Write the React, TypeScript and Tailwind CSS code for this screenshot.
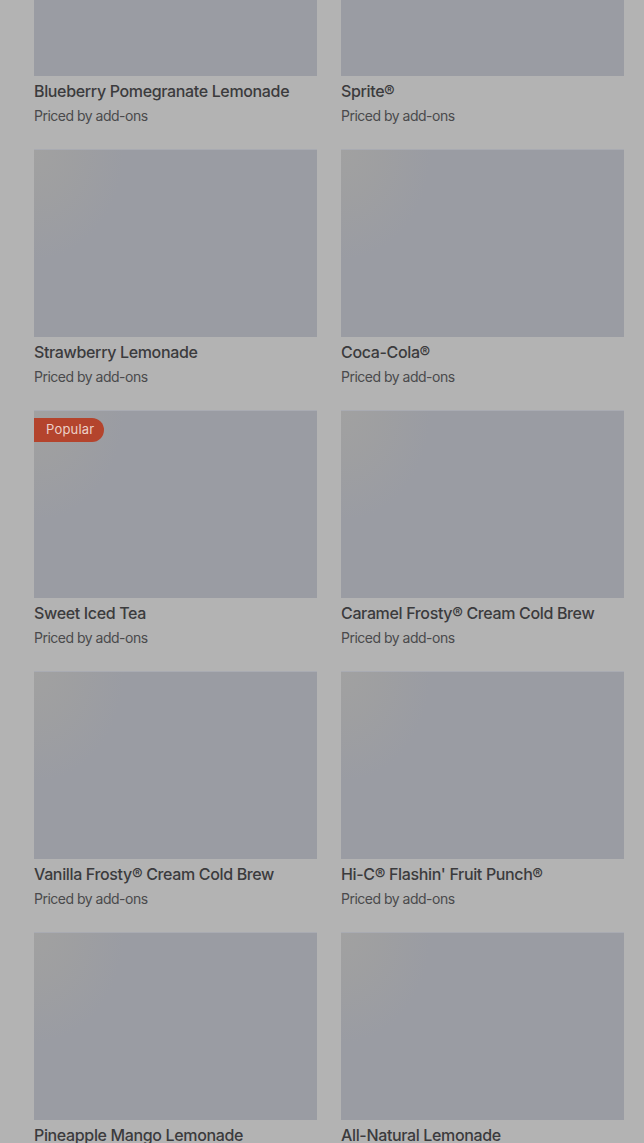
const ITEMS: Array<{ name: string; popular?: boolean }> = [
  { name: 'Blueberry Pomegranate Lemonade' },
  { name: 'Sprite®' },
  { name: 'Strawberry Lemonade' },
  { name: 'Coca-Cola®' },
  { name: 'Sweet Iced Tea', popular: true },
  { name: 'Caramel Frosty® Cream Cold Brew' },
  { name: 'Vanilla Frosty® Cream Cold Brew' },
  { name: 'Hi-C® Flashin\' Fruit Punch®' },
  { name: 'Pineapple Mango Lemonade' },
  { name: 'All-Natural Lemonade' },
];

function MenuCard({ name, popular }: { name: string; popular?: boolean }) {
  return (
    <div className="flex flex-col">
      <div className="relative h-[188px] bg-[#9a9ca3] border-t border-[#a9abb2]">
        <div className="absolute inset-0 bg-[radial-gradient(ellipse_90px_110px_at_top_left,#a1a1a1_0%,rgba(160,160,160,0.7)_45%,rgba(154,156,163,0)_100%)]" />
        {popular && (
          <span className="absolute left-0 top-[7px] h-6 pl-3 pr-[10px] flex items-center rounded-r-full bg-[#b4442d] text-[13px] text-[#ecd0c8] tracking-[0.2px]">
            Popular
          </span>
        )}
      </div>
      <div className="mt-[5px] text-[16px] leading-5 font-medium text-[#3b3b3d] tracking-[-0.35px]">{name}</div>
      <div className="mt-[5px] text-[14px] leading-5 text-[#4a4a4c] tracking-[-0.5px]">Priced by add-ons</div>
    </div>
  );
}

export default function App() {
  return (
    <div className="h-[1143px] overflow-hidden bg-[#b3b3b3] font-['Inter','Liberation_Sans',sans-serif]">
      <div className="-mt-[112px] pl-[34px] pr-[20px] grid grid-cols-2 gap-x-6 gap-y-[23px]">
        {ITEMS.map((it) => (
          <MenuCard key={it.name} name={it.name} popular={it.popular} />
        ))}
      </div>
    </div>
  );
}
